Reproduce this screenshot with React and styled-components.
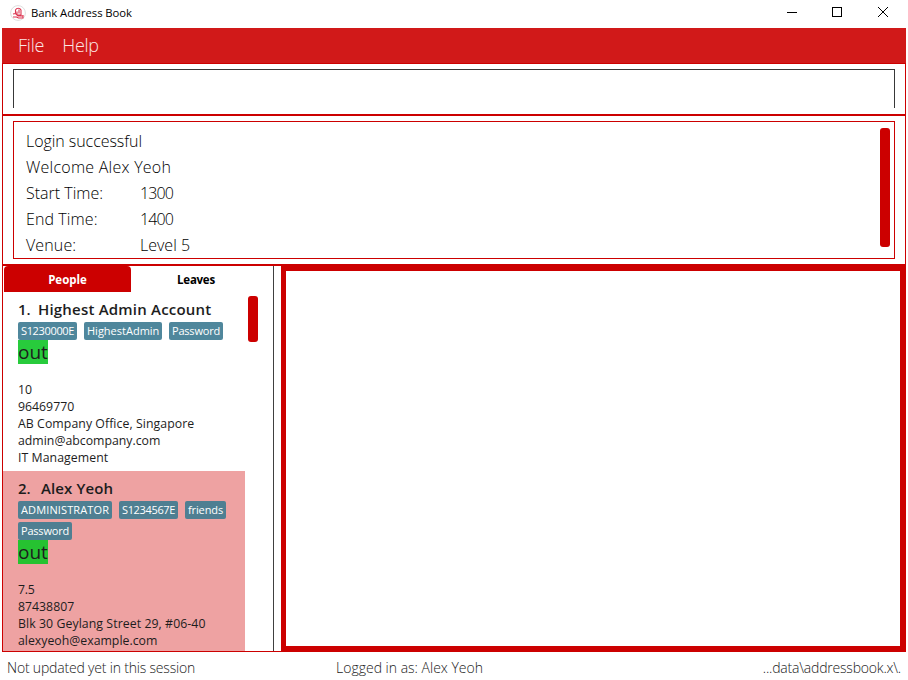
import React from "react";
import styled, { createGlobalStyle, css } from "styled-components";

const RED = "#cc0000";

const GlobalStyle = createGlobalStyle`
  *, *::before, *::after { box-sizing: border-box; }
  html, body { margin: 0; padding: 0; background: #fff; }
  body { font-family: "Open Sans", "Noto Sans", sans-serif; color: #1d1d1d; overflow: hidden; }
`;

const Window = styled.div`
  width: 908px;
  height: 680px;
  display: flex;
  flex-direction: column;
  background: #fff;
`;

/* Text run with its own size, weight and tracking */
const Text = styled.span`
  display: block;
  white-space: pre;
  font-size: ${(p) => p.$size}px;
  font-weight: ${(p) => p.$weight || 400};
  letter-spacing: ${(p) => p.$track || 0}px;
`;

const TitleBar = styled.header`
  height: 28px;
  flex: none;
  display: flex;
  align-items: center;
  padding: 0 19px 3px 10px;
  line-height: 24px;
  color: #000;
`;
const AppIcon = styled.svg`
  width: 16px;
  height: 16px;
  margin-right: 5px;
`;
const Controls = styled.div`
  margin-left: auto;
  display: flex;
  gap: 35px;
  svg { display: block; }
`;

const Frame = styled.main`
  width: 904px;
  height: 624px;
  flex: none;
  margin-left: 2px;
  display: flex;
  flex-direction: column;
  border: solid ${RED};
  border-width: 0 1px 1px;
`;
const MenuBar = styled.nav`
  height: 36px;
  flex: none;
  margin: 0 -1px;
  padding-left: 16px;
  display: flex;
  gap: 18px;
  line-height: 34px;
  color: #fbe6e6;
  background: #d11919;
  border-bottom: 1px solid ${RED};
`;
const CommandPane = styled.section`
  height: 52px;
  flex: none;
  padding: 5px 10px 6px;
  border-bottom: 2px solid ${RED};
`;
const CommandBox = styled.div`
  height: 39px;
  border: solid #383838;
  border-width: 1px 1px 0;
`;
const ResultPane = styled.section`
  height: 150px;
  flex: none;
  padding: 5px 10px;
  border-bottom: 2px solid ${RED};
`;
const ResultBox = styled.div`
  height: 138px;
  display: flex;
  justify-content: space-between;
  padding: 6px 4px 0 12px;
  border: 1px solid ${RED};
`;
const ResultGrid = styled.div`
  display: grid;
  grid-template-columns: 114px auto;
  grid-auto-rows: 26px;
  line-height: 26px;
  color: #000;
`;
const Wide = styled.div`
  grid-column: 1 / -1;
`;
const Thumb = styled.div`
  flex: none;
  width: 10px;
  height: ${(p) => p.$height}px;
  border-radius: 3px;
  background: ${RED};
`;

const Split = styled.div`
  flex: 1;
  min-height: 0;
  display: flex;
`;
const ListPane = styled.section`
  width: 271px;
  flex: none;
  display: flex;
  flex-direction: column;
  overflow: hidden;
  border-right: 1px solid #404040;
`;
const Tabs = styled.div`
  flex: none;
  display: flex;
  height: 26px;
  padding-left: 1px;
`;
const Tab = styled.div`
  width: ${(p) => p.$width}px;
  text-align: center;
  line-height: 28px;
  border-radius: 4px 4px 0 0;
  ${(p) =>
    p.$active
      ? css`background: ${RED}; color: #fff;`
      : css`color: #000;`}
`;
const ListBody = styled.div`
  display: flex;
  flex: 1;
  min-height: 0;
`;
const Cards = styled.div`
  width: 242px;
  flex: none;
  margin-right: 3px;
`;
const Card = styled.article`
  height: ${(p) => p.$height}px;
  overflow: hidden;
  padding: 6px 10px 5px 15px;
  background: ${(p) => (p.$selected ? "#eea2a2" : "#fff")};
`;
const Name = styled.div`
  display: flex;
  height: 24px;
  line-height: 23px;
`;
const Index = styled.div`
  width: ${(p) => p.$width}px;
`;
const Tags = styled.div`
  display: flex;
  flex-wrap: wrap;
  gap: 3px 7px;
`;
const Tag = styled.div`
  width: ${(p) => p.$width}px;
  height: 18px;
  padding-left: 3px;
  line-height: 18px;
  border-radius: 2px;
  color: #fff;
  background: ${(p) => (p.$selected ? "#4f7f92" : "#4f879c")};
`;
const Status = styled.div`
  width: 30px;
  height: 24px;
  line-height: 24px;
  margin-bottom: 17px;
  background: ${(p) => (p.$selected ? "#26c231" : "#28cb3c")};
`;
const Detail = styled.div`
  height: 17px;
  line-height: 17px;
`;
const ListTrack = styled.div`
  padding-top: 4px;
`;
const Browser = styled.section`
  flex: 1;
  margin: -2px -1px -1px 7px;
  border: solid ${RED};
  border-width: 7px 6px 6px 5px;
`;

const StatusBar = styled.footer`
  flex: 1;
  display: grid;
  grid-template-columns: 329px 1fr auto;
  padding: 0 7px;
  line-height: 31px;
  color: #1a1a1a;
`;

const PEOPLE = [
  {
    name: "Highest Admin Account",
    nameTrack: 0.2,
    indexWidth: 20,
    height: 179,
    tags: [["S1230000E", 59, -0.35], ["HighestAdmin", 78, 0], ["Password", 54, -0.2]],
    details: [
      ["10", 0],
      ["96469770", 0],
      ["AB Company Office, Singapore", 0.06],
      ["admin@abcompany.com", 0],
      ["IT Management", 0.06],
    ],
  },
  {
    name: "Alex Yeoh",
    nameTrack: 0.12,
    indexWidth: 23,
    height: 180,
    selected: true,
    tags: [["ADMINISTRATOR", 94, 0.12], ["S1234567E", 59, -0.35], ["friends", 41, -0.12], ["Password", 54, -0.2]],
    details: [
      ["7.5", -0.2],
      ["87438807", 0],
      ["Blk 30 Geylang Street 29, #06-40", 0.07],
      ["alexyeoh@example.com", 0],
    ],
  },
];

const RESULT_ROWS = [
  [["Start Time:", 0], ["1300", -0.9]],
  [["End Time:", 0.1], ["1400", -0.9]],
  [["Venue:", 0.12], ["Level 5", 0]],
];

function Person({ person, index }) {
  const { selected } = person;
  return (
    <Card $height={person.height} $selected={selected}>
      <Name>
        <Index $width={person.indexWidth}><Text $size={15} $weight={600}>{index}.</Text></Index>
        <Text $size={15} $weight={600} $track={person.nameTrack}>{person.name}</Text>
      </Name>
      <Tags>
        {person.tags.map(([label, width, track]) => (
          <Tag key={label} $width={width} $selected={selected}>
            <Text $size={11} $track={track}>{label}</Text>
          </Tag>
        ))}
      </Tags>
      <Status $selected={selected}><Text $size={19}>out</Text></Status>
      {person.details.map(([value, track]) => (
        <Detail key={value}><Text $size={12.3} $track={track}>{value}</Text></Detail>
      ))}
    </Card>
  );
}

export default function App() {
  return (
    <>
      <GlobalStyle />
      <Window>
        <TitleBar>
          <AppIcon viewBox="0 0 16 16" fill="none">
            <circle cx="8" cy="8" r="7.4" stroke="#dedede" />
            <path d="M5.5 8V5a3 3 0 0 1 5.5 0v5H7V6.5M9 4.5v4M3 9l2.5-.5L8 11h5M3 12h3.5l2 1H13V10" stroke="#db3550" strokeWidth="1.1" />
          </AppIcon>
          <Text $size={11.3} $track={-0.05}>Bank Address Book</Text>
          <Controls>
            <svg width="11" height="11" viewBox="0 0 11 11" shapeRendering="crispEdges"><path d="M1 5.5h10" stroke="#000" /></svg>
            <svg width="11" height="11" viewBox="0 0 11 11" shapeRendering="crispEdges"><path d="M.5.5h9v9h-9z" fill="none" stroke="#000" /></svg>
            <svg width="11" height="11" viewBox="0 0 11 11"><path d="M0 0l10 10M10 0l-10 10" stroke="#000" /></svg>
          </Controls>
        </TitleBar>
        <Frame>
          <MenuBar>
            <Text $size={18} $weight={300} $track={-0.2}>File</Text>
            <Text $size={18} $weight={300} $track={-0.3}>Help</Text>
          </MenuBar>
          <CommandPane><CommandBox /></CommandPane>
          <ResultPane>
            <ResultBox>
              <ResultGrid>
                <Wide><Text $size={16} $weight={300} $track={-0.05}>Login successful</Text></Wide>
                <Wide><Text $size={16} $weight={300} $track={0.25}>Welcome Alex Yeoh</Text></Wide>
                {RESULT_ROWS.flat().map(([value, track]) => (
                  <Text key={value} $size={16} $weight={300} $track={track}>{value}</Text>
                ))}
              </ResultGrid>
              <Thumb $height={119} />
            </ResultBox>
          </ResultPane>
          <Split>
            <ListPane>
              <Tabs>
                <Tab $width={127} $active><Text $size={11.5} $weight={700}>People</Text></Tab>
                <Tab $width={130}><Text $size={11.5} $weight={700} $track={-0.25}>Leaves</Text></Tab>
              </Tabs>
              <ListBody>
                <Cards>{PEOPLE.map((p, i) => <Person key={p.name} person={p} index={i + 1} />)}</Cards>
                <ListTrack><Thumb $height={46} /></ListTrack>
              </ListBody>
            </ListPane>
            <Browser />
          </Split>
        </Frame>
        <StatusBar>
          <Text $size={14} $weight={300} $track={-0.19}>Not updated yet in this session</Text>
          <Text $size={14} $weight={300}>Logged in as: Alex Yeoh</Text>
          <Text $size={14} $weight={300} $track={-0.2}>...data\addressbook.x\.</Text>
        </StatusBar>
      </Window>
    </>
  );
}
